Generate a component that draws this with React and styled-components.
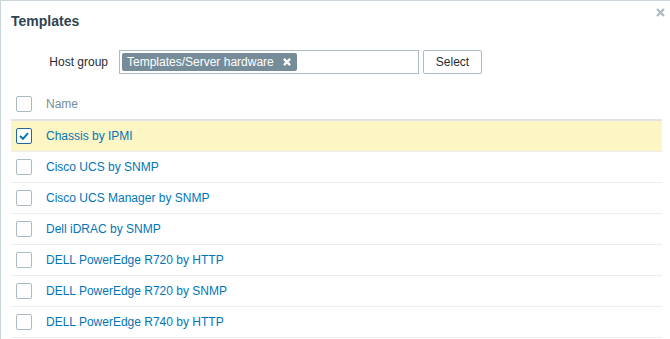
import React, { useState } from 'react';
import styled, { createGlobalStyle } from 'styled-components';

const GlobalStyle = createGlobalStyle`
  html, body {
    margin: 0;
    padding: 0;
    background: #fff;
    overflow: hidden;
  }
  body {
    font-family: "Liberation Sans", Arial, sans-serif;
    font-size: 12px;
    color: #1f2c33;
  }
`;

const Dialog = styled.div`
  position: relative;
  box-sizing: border-box;
  height: 100vh;
  border-top: 1px solid #ccd5d9;
  border-left: 1px solid #ccd5d9;
  padding: 0 8px 0 10px;
`;

const Title = styled.h4`
  margin: 0;
  padding-top: 11px;
  font-size: 14px;
  line-height: 18px;
  font-weight: bold;
  color: #2f4352;
`;

const CloseButton = styled.button`
  position: absolute;
  top: 7px;
  right: 5px;
  width: 9px;
  height: 9px;
  padding: 0;
  border: 0;
  background: none;
  cursor: pointer;
  display: flex;
`;

const FormRow = styled.div`
  display: grid;
  grid-template-columns: 97px auto auto;
  justify-content: start;
  align-items: center;
  column-gap: 11px;
  margin-top: 20px;
`;

const Label = styled.label`
  text-align: right;
  line-height: 24px;
`;

const Controls = styled.div`
  display: flex;
  gap: 4px;
`;

const MultiSelect = styled.div`
  box-sizing: border-box;
  width: 300px;
  height: 24px;
  border: 1px solid #acbbc2;
  padding: 2px;
  display: flex;
  align-items: flex-start;
`;

const Chip = styled.span`
  display: inline-flex;
  align-items: center;
  gap: 9px;
  height: 18px;
  padding: 0 6px 0 5px;
  border-radius: 2px;
  background: #768d99;
  color: #fff;
  line-height: 18px;
  white-space: nowrap;
`;

const Button = styled.button`
  box-sizing: border-box;
  width: 59px;
  height: 24px;
  border: 1px solid #acbbc2;
  border-radius: 2px;
  background: #fff;
  color: #1f2c33;
  font-family: inherit;
  font-size: 12px;
  padding: 0;
  cursor: pointer;
`;

const Table = styled.table`
  width: 100%;
  margin-top: 15px;
  border-collapse: collapse;
  table-layout: fixed;
`;

const HeadCell = styled.th`
  height: 30px;
  padding: 0;
  text-align: left;
  font-weight: normal;
  color: #768d99;
  border-bottom: 2px solid #dfe4e7;
  vertical-align: middle;
`;

const CheckCol = styled.col`
  width: 35px;
`;

const Row = styled.tr`
  background: ${(p) => (p.$selected ? '#fcf6c4' : '#fff')};
`;

const Cell = styled.td`
  height: 30px;
  padding: 0;
  border-bottom: 1px solid #ebeef0;
  vertical-align: middle;
`;

const BoxWrap = styled.div`
  padding-left: 5px;
  display: flex;
  align-items: center;
`;

const Box = styled.span`
  box-sizing: border-box;
  width: 16px;
  height: 16px;
  border: 1px solid ${(p) => (p.$checked ? '#2166a1' : '#acbbc2')};
  border-radius: 2px;
  background: #fff;
  display: flex;
  align-items: center;
  justify-content: center;
  cursor: pointer;
`;

const NameLink = styled.a`
  color: #0275b8;
  text-decoration: none;
  cursor: pointer;
`;

const templates = [
  'Chassis by IPMI',
  'Cisco UCS by SNMP',
  'Cisco UCS Manager by SNMP',
  'Dell iDRAC by SNMP',
  'DELL PowerEdge R720 by HTTP',
  'DELL PowerEdge R720 by SNMP',
  'DELL PowerEdge R740 by HTTP',
];

function CrossIcon({ color, size, weight = 2.2 }) {
  return (
    <svg width={size} height={size} viewBox="0 0 9 9">
      <path d="M1 1 L8 8 M8 1 L1 8" stroke={color} strokeWidth={weight} />
    </svg>
  );
}

function Checkbox({ checked, onClick }) {
  return (
    <Box $checked={checked} onClick={onClick}>
      {checked && (
        <svg width="10" height="8" viewBox="0 0 10 8">
          <path d="M1 4 L4 6.8 L9 1.2" fill="none" stroke="#0275b8" strokeWidth="2" />
        </svg>
      )}
    </Box>
  );
}

export default function App() {
  const [checked, setChecked] = useState({ 0: true });

  const toggle = (i) => setChecked({ ...checked, [i]: !checked[i] });

  return (
    <Dialog>
      <GlobalStyle />
      <Title>Templates</Title>
      <CloseButton title="Close">
        <CrossIcon color="#acbbc2" size={9} />
      </CloseButton>

      <FormRow>
        <Label>Host group</Label>
        <Controls>
          <MultiSelect>
            <Chip>
              Templates/Server hardware
              <CrossIcon color="#fff" size={8} weight={2.6} />
            </Chip>
          </MultiSelect>
          <Button>Select</Button>
        </Controls>
      </FormRow>

      <Table>
        <colgroup>
          <CheckCol />
          <col />
        </colgroup>
        <thead>
          <tr>
            <HeadCell>
              <BoxWrap>
                <Checkbox checked={false} />
              </BoxWrap>
            </HeadCell>
            <HeadCell>Name</HeadCell>
          </tr>
        </thead>
        <tbody>
          {templates.map((name, i) => (
            <Row key={name} $selected={!!checked[i]}>
              <Cell>
                <BoxWrap>
                  <Checkbox checked={!!checked[i]} onClick={() => toggle(i)} />
                </BoxWrap>
              </Cell>
              <Cell>
                <NameLink>{name}</NameLink>
              </Cell>
            </Row>
          ))}
        </tbody>
      </Table>
    </Dialog>
  );
}
